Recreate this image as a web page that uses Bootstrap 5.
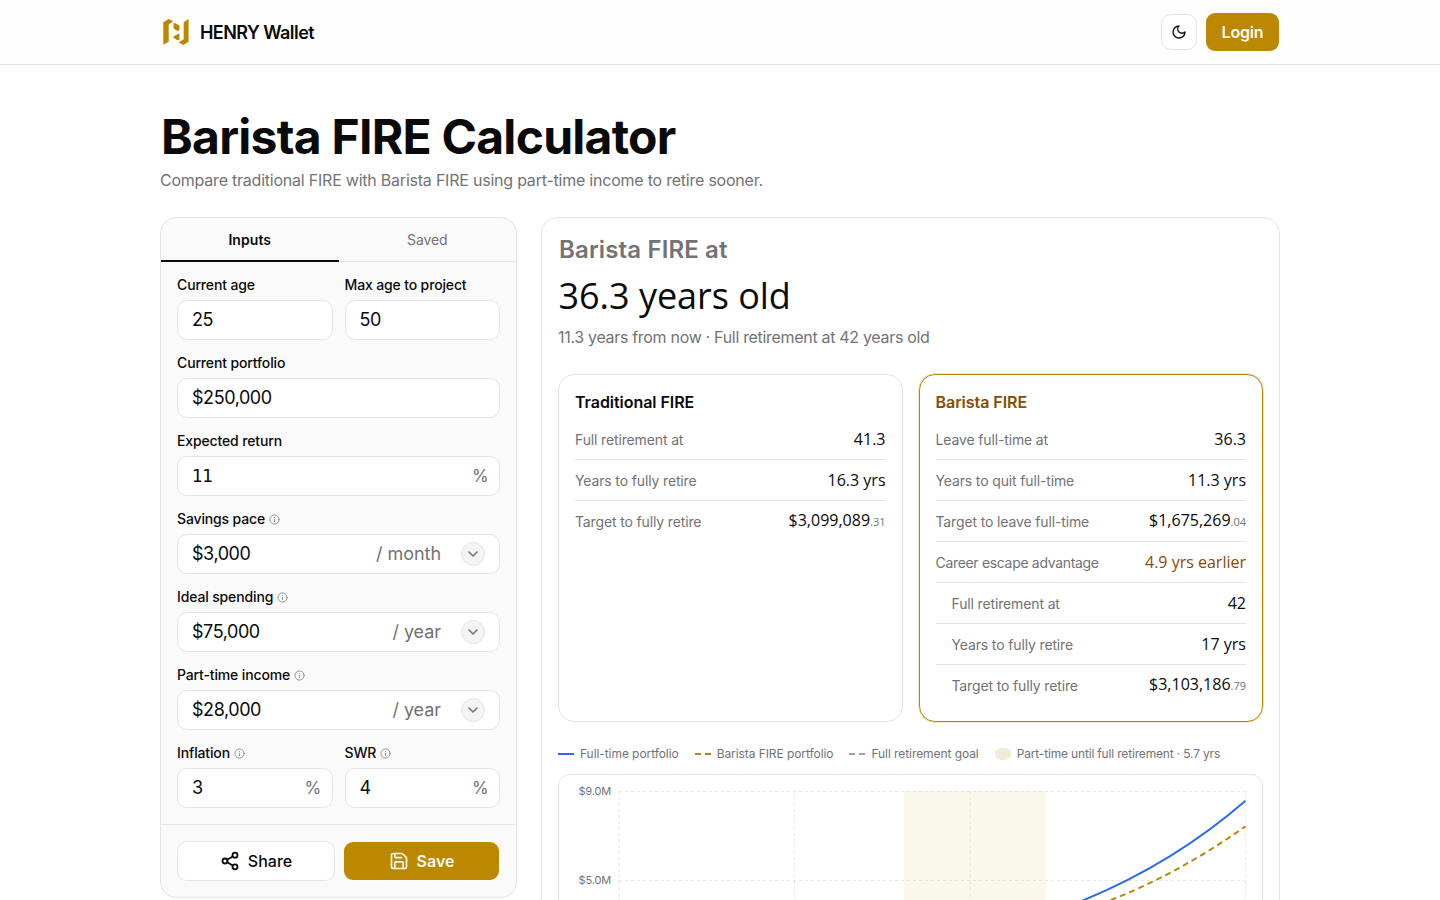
<!DOCTYPE html>
<html lang="en">
<head>
<meta charset="utf-8">
<meta name="viewport" content="width=device-width, initial-scale=1">
<title>Barista FIRE Calculator</title>
<link rel="stylesheet" href="https://cdn.jsdelivr.net/npm/bootstrap@5.3.0/dist/css/bootstrap.min.css">
<style>
:root{--gold:#bb8800;--line:#e5e5e5;--muted:#737373;--ink:#0a0a0a}
html,body{height:100%;overflow:hidden}
body{font-family:Inter,"Liberation Sans",sans-serif;color:var(--ink);font-size:14px;line-height:20px;letter-spacing:-.01em}
.wrap{width:1119px;margin-left:160px}
.topbar{height:65px;border-bottom:1px solid var(--line);background:#fefefe}
.page{height:calc(100vh - 65px);overflow:hidden}
.brand{font-size:18px;font-weight:600;letter-spacing:-.031em;line-height:22px;padding-top:1px}
.btn{letter-spacing:0;line-height:24px}
.btn-gold{--bs-btn-bg:var(--gold);--bs-btn-color:#fefcf0;--bs-btn-hover-bg:#a87a00;--bs-btn-hover-color:#fff;border:0;border-radius:9px;font-weight:600;height:38px}
.btn-line{background:#fff;border:1px solid var(--line);border-radius:10px;font-weight:500;color:var(--ink)}
.btn-square{width:36px;height:36px}
.login{width:73px;margin-left:9px;letter-spacing:-.012em;padding:0 0 1px}
.share{width:158px;height:40px}
.save{width:155px;margin-left:9px}
h1{font-size:48px;line-height:48px;font-weight:700;letter-spacing:-.0155em;margin-bottom:7px;padding-left:1px}
.subtitle{font-size:16px;line-height:24px;color:var(--muted);letter-spacing:-.014em}
.intro{margin-bottom:25px}
.panel{border:1px solid var(--line);border-radius:16px}
.side{width:357px;height:681px;background:#fafafa}
.side .nav-link{height:44px;border-bottom:1px solid var(--line);color:var(--muted);padding:1px 0 0}
.side .nav-link.active{border-bottom:2px solid var(--ink);color:var(--ink);font-weight:600;letter-spacing:.005em;padding-top:2px}
.fields{padding:13px 16px 16px;display:grid;grid-template-columns:1fr 1fr;gap:13px 12px}
.wide{grid-column:1/3}
.fields label{font-weight:500;height:20px;margin-bottom:5px;display:flex;align-items:center;gap:4px}
.box{height:40px;background:#fff;border:1px solid var(--line);border-radius:10px;padding:0 14px;font-size:18px;letter-spacing:-.024em}
.box .unit{color:var(--muted);letter-spacing:-.003em}
.box.pct{padding-right:11px}
.box.pct .unit{font-size:17px;letter-spacing:-.04em}
.slab{font-family:"DejaVu Sans",sans-serif;font-size:17px;letter-spacing:-.04em}
.chev{width:24px;height:24px;border-radius:50%;background:#f4f4f4;border:1px solid var(--line);margin-left:20px}
.foot{border-top:1px solid var(--line);padding:16px}
.num{font-family:"Open Sans","Noto Sans",sans-serif;font-size:16px;letter-spacing:0}
.num.year{font-size:36px;line-height:40px;letter-spacing:-.001em;margin-top:10px;padding-left:.5px}
.num small{font-size:11px;color:var(--muted)}
.results{padding:16px;height:760px}
.eyebrow{font-size:24px;line-height:32px;font-weight:600;color:var(--muted);letter-spacing:.006em;padding-left:1px}
.now{letter-spacing:-.0195em;margin-top:8.5px}
.plans{margin-top:25.5px;gap:16px}
.plan{flex:1 1 0;height:348px;border:1px solid var(--line);border-radius:16px;padding:16px}
.plan.hot{border-color:var(--gold);box-shadow:0 0 0 .5px rgba(187,136,0,.45)}
.plan h2{font-size:16px;line-height:22px;font-weight:600;letter-spacing:-.003em;margin:0 0 6px}
.brown{color:#894b00}
.line-item{height:41px;border-bottom:1px solid var(--line);color:var(--muted);padding-top:2px}
.line-item:last-child{border-bottom:0;height:40px}
.line-item .num{color:var(--ink);margin-top:-3px}
.line-item .num.brown{color:#894b00}
.tighter{letter-spacing:-.023em}
.keys{font-size:12px;line-height:16px;color:var(--muted);gap:16px;letter-spacing:-.006em}
.keys span{display:flex;align-items:center;gap:6px;white-space:nowrap}
.keys .until{letter-spacing:-.014em}
.chart{border:1px solid var(--line);border-radius:12px;height:330px;overflow:hidden}
.chart text{font-size:11px;fill:var(--muted);letter-spacing:-.015em}
svg{display:block;flex:none}
</style>
</head>
<body>
<svg width="0" height="0" class="position-absolute">
  <symbol id="info" viewBox="0 0 24 24"><g fill="none" stroke="#8a8a8a" stroke-width="2" stroke-linecap="round"><circle cx="12" cy="12" r="10"/><path d="M12 16.5v-5M12 7.6h.01"/></g></symbol>
  <symbol id="down" viewBox="0 0 24 24"><path d="m6 9 6 6 6-6" fill="none" stroke="#737373" stroke-width="2.4" stroke-linecap="round" stroke-linejoin="round"/></symbol>
</svg>
<header class="topbar">
  <div class="wrap h-100 d-flex align-items-center justify-content-between">
    <div class="d-flex align-items-center">
      <svg width="32" height="32" viewBox="0 0 32 32" fill="#bb8800"><path d="M3.300 6.300 8.600 3 13.200 5.200 8.700 8.600V25.800L3.300 28.800zM13.600 6.600 19.400 9.600V14.400L17.200 14.800 13.500 12.400zM19.400 17.200V24.200L16.900 24 13.500 21.800V20.600zM28.600 3V26L23.200 28.900 18.600 26.300 23.700 23.200V6.200z"/></svg>
      <span class="brand ms-2">HENRY Wallet</span>
    </div>
    <div class="d-flex align-items-center">
      <button class="btn btn-line btn-square p-0 d-flex align-items-center justify-content-center" aria-label="Theme"><svg width="16" height="16" viewBox="0 0 24 24" fill="none" stroke="#0a0a0a" stroke-width="2" stroke-linecap="round" stroke-linejoin="round"><path d="M12 3a6 6 0 0 0 9 9 9 9 0 1 1-9-9"/></svg></button>
      <button class="btn btn-gold login">Login</button>
    </div>
  </div>
</header>
<main class="page">
 <div class="wrap">
  <h1 class="pt-5">Barista FIRE Calculator</h1>
  <p class="subtitle intro">Compare traditional FIRE with Barista FIRE using part-time income to retire sooner.</p>
  <div class="d-flex gap-4">
    <section class="panel side flex-shrink-0">
      <nav class="nav nav-fill">
        <a class="nav-link active w-50 d-flex align-items-center justify-content-center">Inputs</a>
        <a class="nav-link w-50 d-flex align-items-center justify-content-center">Saved</a>
      </nav>
      <div class="fields">
        <div><label>Current age</label><div class="box d-flex align-items-center">25</div></div>
        <div><label>Max age to project</label><div class="box d-flex align-items-center">50</div></div>
        <div class="wide"><label>Current portfolio</label><div class="box d-flex align-items-center">$250,000</div></div>
        <div class="wide"><label>Expected return</label><div class="box pct d-flex align-items-center"><span class="slab">11</span><span class="unit ms-auto">%</span></div></div>
        <div class="wide"><label>Savings pace <svg width="11" height="11"><use href="#info"/></svg></label><div class="box d-flex align-items-center">$3,000<span class="unit ms-auto">/ month</span><span class="chev d-flex align-items-center justify-content-center"><svg width="16" height="16"><use href="#down"/></svg></span></div></div>
        <div class="wide"><label>Ideal spending <svg width="11" height="11"><use href="#info"/></svg></label><div class="box d-flex align-items-center">$75,000<span class="unit ms-auto">/ year</span><span class="chev d-flex align-items-center justify-content-center"><svg width="16" height="16"><use href="#down"/></svg></span></div></div>
        <div class="wide"><label>Part-time income <svg width="11" height="11"><use href="#info"/></svg></label><div class="box d-flex align-items-center">$28,000<span class="unit ms-auto">/ year</span><span class="chev d-flex align-items-center justify-content-center"><svg width="16" height="16"><use href="#down"/></svg></span></div></div>
        <div><label>Inflation <svg width="11" height="11"><use href="#info"/></svg></label><div class="box pct d-flex align-items-center">3<span class="unit ms-auto">%</span></div></div>
        <div><label>SWR <svg width="11" height="11"><use href="#info"/></svg></label><div class="box pct d-flex align-items-center">4<span class="unit ms-auto">%</span></div></div>
      </div>
      <div class="foot d-flex align-items-center">
        <button class="btn btn-line share p-0 d-flex align-items-center justify-content-center gap-2"><svg width="20" height="20" viewBox="0 0 24 24" fill="none" stroke="#0a0a0a" stroke-width="2.2" stroke-linecap="round"><circle cx="18" cy="5" r="3"/><circle cx="6" cy="12" r="3"/><circle cx="18" cy="19" r="3"/><path d="m8.6 13.5 6.8 4M15.400 6.500l-6.800 4"/></svg>Share</button>
        <button class="btn btn-gold save p-0 d-flex align-items-center justify-content-center gap-2"><svg width="20" height="20" viewBox="0 0 24 24" fill="none" stroke="#fefcf0" stroke-width="2" stroke-linecap="round" stroke-linejoin="round"><path d="M15.200 3a2 2 0 0 1 1.400.6l3.800 3.800a2 2 0 0 1 .6 1.400V19a2 2 0 0 1-2 2H5a2 2 0 0 1-2-2V5a2 2 0 0 1 2-2z"/><path d="M17 21v-7a1 1 0 0 0-1-1H8a1 1 0 0 0-1 1v7M7 3v4a1 1 0 0 0 1 1h7"/></svg>Save</button>
      </div>
    </section>
    <section class="panel results flex-grow-1">
      <div class="eyebrow">Barista FIRE at</div>
      <div class="num year">36.3 years old</div>
      <div class="subtitle now">11.3 years from now · Full retirement at 42 years old</div>
      <div class="d-flex plans">
        <div class="plan">
          <h2>Traditional FIRE</h2>
          <div class="line-item d-flex align-items-center justify-content-between">Full retirement at<span class="num">41.3</span></div>
          <div class="line-item d-flex align-items-center justify-content-between">Years to fully retire<span class="num">16.3 yrs</span></div>
          <div class="line-item d-flex align-items-center justify-content-between">Target to fully retire<span class="num">$3,099,089<small>.31</small></span></div>
        </div>
        <div class="plan hot">
          <h2 class="brown">Barista FIRE</h2>
          <div class="line-item d-flex align-items-center justify-content-between">Leave full-time at<span class="num">36.3</span></div>
          <div class="line-item d-flex align-items-center justify-content-between">Years to quit full-time<span class="num">11.3 yrs</span></div>
          <div class="line-item d-flex align-items-center justify-content-between">Target to leave full-time<span class="num">$1,675,269<small>.04</small></span></div>
          <div class="line-item tighter d-flex align-items-center justify-content-between">Career escape advantage<span class="num brown">4.9 yrs earlier</span></div>
          <div class="line-item ps-3 d-flex align-items-center justify-content-between">Full retirement at<span class="num">42</span></div>
          <div class="line-item ps-3 d-flex align-items-center justify-content-between">Years to fully retire<span class="num">17 yrs</span></div>
          <div class="line-item ps-3 d-flex align-items-center justify-content-between">Target to fully retire<span class="num">$3,103,186<small>.79</small></span></div>
        </div>
      </div>
      <div class="keys d-flex mt-4 mb-2 pb-1">
        <span><svg width="16" height="2"><path d="M0 1h16" stroke="#2b6bf3" stroke-width="2"/></svg>Full-time portfolio</span>
        <span><svg width="16" height="2"><path d="M0 1h16" stroke="#bb8800" stroke-width="2" stroke-dasharray="6 4"/></svg>Barista FIRE portfolio</span>
        <span><svg width="16" height="2"><path d="M0 1h16" stroke="#a1a1a1" stroke-width="2" stroke-dasharray="6 4"/></svg>Full retirement goal</span>
        <span class="until"><svg width="16" height="12"><rect width="16" height="12" rx="6" fill="#f3ebd9"/></svg>Part-time until full retirement · 5.7 yrs</span>
      </div>
      <div class="chart">
        <svg width="703" height="300" viewBox="559 775 703 300" fill="none">
          <rect x="904" y="791" width="142.500" height="209" fill="#faf7eb"/>
          <g stroke="#d8d8d8" stroke-opacity=".65" stroke-dasharray="3 3">
            <path d="M619 791.500H1245.500M619 880.500H1245.500M619 791V1000M794.500 791V1000M970 791V1000M1245.500 791V1000"/>
          </g>
          <path d="M1060 909.500 1084.700 899.700C1138.300 877.400 1191.900 847.200 1245.500 800.700" stroke="#2b6bf3" stroke-width="2"/>
          <path d="M1245.500 826.300C1200.900 858 1156.300 882.100 1111.700 899.700L1090 908" stroke="#bb8800" stroke-width="2" stroke-dasharray="6 4" stroke-dashoffset="2"/>
          <text x="611" y="795" text-anchor="end">$9.0M</text>
          <text x="611" y="884" text-anchor="end">$5.0M</text>
        </svg>
      </div>
    </section>
  </div>
 </div>
</main>
<script src="https://cdn.jsdelivr.net/npm/bootstrap@5.3.0/dist/js/bootstrap.bundle.min.js"></script>
</body>
</html>
